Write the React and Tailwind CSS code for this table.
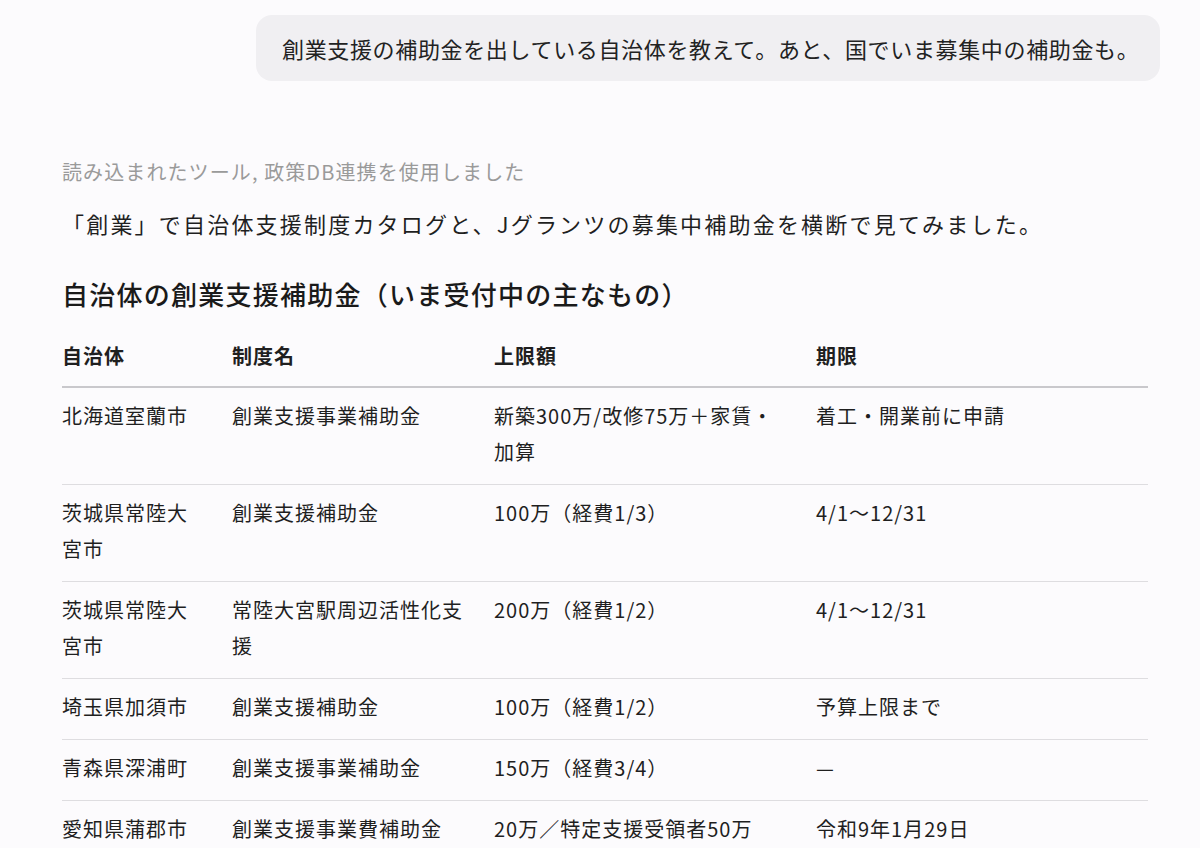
import React from "react";

const rows = [
  ["北海道室蘭市", "創業支援事業補助金", "新築300万/改修75万＋家賃・加算", "着工・開業前に申請"],
  ["茨城県常陸大宮市", "創業支援補助金", "100万（経費1/3）", "4/1〜12/31"],
  ["茨城県常陸大宮市", "常陸大宮駅周辺活性化支援", "200万（経費1/2）", "4/1〜12/31"],
  ["埼玉県加須市", "創業支援補助金", "100万（経費1/2）", "予算上限まで"],
  ["青森県深浦町", "創業支援事業補助金", "150万（経費3/4）", "—"],
  ["愛知県蒲郡市", "創業支援事業費補助金", "20万／特定支援受領者50万", "令和9年1月29日"],
];

export default function App() {
  return (
    <div
      className="w-[1200px] h-[848px] overflow-hidden bg-[#fcfbfd] text-[#1f1f1f]"
      style={{ fontFamily: '"Noto Sans CJK JP", "Noto Sans", sans-serif' }}
    >
      <div className="flex justify-end pt-[15px] pr-[40px]">
        <div className="w-[904px] h-[66px] rounded-[16px] bg-[#f0eff2] flex items-center pl-[26px] text-[22px] tracking-[0.65px] text-[#222]">
          創業支援の補助金を出している自治体を教えて。あと、国でいま募集中の補助金も。
        </div>
      </div>

      <div className="pl-[62px] pr-[52px]">
        <div className="mt-[77px] text-[20px] leading-[28px] text-[#9a9a9a] tracking-[1.1px]">
          読み込まれたツール, 政策DB連携を使用しました
        </div>
        <div className="mt-[21px] text-[22px] leading-[32px] tracking-[2.2px] text-[#1f1f1f]">
          「創業」で自治体支援制度カタログと、Jグランツの募集中補助金を横断で見てみました。
        </div>
        <div className="mt-[37px] text-[26px] leading-[36px] font-medium tracking-[1.25px] text-[#1a1a1a]">
          自治体の創業支援補助金（いま受付中の主なもの）
        </div>

        <table className="mt-[26px] w-[1086px] table-fixed border-collapse text-[20px] leading-[36px] tracking-[1px]">
          <colgroup>
            <col className="w-[170px]" />
            <col className="w-[262px]" />
            <col className="w-[322px]" />
            <col />
          </colgroup>
          <thead>
            <tr className="border-b-2 border-[#c9c8cc]">
              {["自治体", "制度名", "上限額", "期限"].map((h) => (
                <th key={h} className="text-left font-semibold pr-6 pt-[0px] pb-[12px] align-top">
                  {h}
                </th>
              ))}
            </tr>
          </thead>
          <tbody>
            {rows.map((r, i) => (
              <tr key={i} className="border-b border-[#dedde0]">
                {r.map((c, j) => (
                  <td key={j} className="pr-6 pt-[10px] pb-[14px] align-top font-normal">
                    {c}
                  </td>
                ))}
              </tr>
            ))}
          </tbody>
        </table>
      </div>
    </div>
  );
}
